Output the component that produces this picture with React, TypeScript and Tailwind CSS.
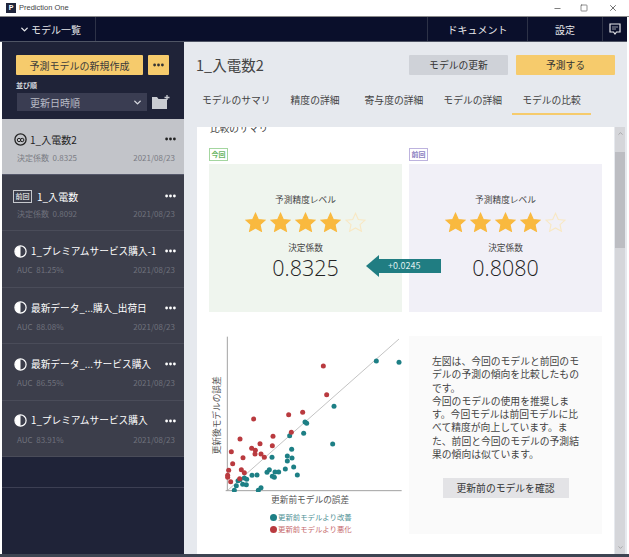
import { ChevronDown, Minus, Square, X } from "lucide-react";

const FONT = "font-['Noto_Sans_CJK_JP','Noto_Sans',sans-serif]";

const models = [
  { name: "1_プレミアムサービス購入-1", label: "AUC", score: "81.25%" },
  { name: "最新データ_...購入_出荷日", label: "AUC", score: "88.08%" },
  { name: "最新データ_...サービス購入", label: "AUC", score: "86.55%" },
  { name: "1_プレミアムサービス購入", label: "AUC", score: "83.91%" },
];

const tabs = [
  { label: "モデルのサマリ", cls: "" },
  { label: "精度の詳細", cls: "" },
  { label: "寄与度の詳細", cls: "ml-[5px]" },
  { label: "モデルの詳細", cls: "" },
  { label: "モデルの比較", cls: "border-b-2 border-[#f6cb6c]" },
];

const teal = [
  [544, 123], [612, 127], [417, 259], [330, 306], [335, 310], [326, 340], [284, 347], [413, 372],
  [290, 388], [231, 412], [277, 408], [291, 414], [277, 423], [296, 441], [271, 447], [307, 465],
  [223, 449], [216, 457], [240, 456], [251, 456], [232, 469], [238, 472], [171, 466], [186, 465],
  [148, 474], [155, 478], [135, 479], [129, 482], [124, 497], [143, 493], [154, 494], [118, 511],
  [190, 511], [198, 503],
];

const red = [
  [385, 138], [395, 224], [323, 277], [281, 284], [176, 297], [289, 337], [234, 349], [135, 357],
  [195, 371], [232, 377], [170, 385], [181, 391], [180, 402], [198, 402], [208, 412], [109, 395],
  [144, 413], [113, 431], [139, 449], [148, 458], [101, 451], [98, 466], [98, 472], [134, 476],
  [107, 485],
];

const Dots = () => (
  <svg width="11" height="4" viewBox="0 0 11 4" fill="currentColor" className="shrink-0">
    <circle cx="1.6" cy="2" r="1.4" />
    <circle cx="5.5" cy="2" r="1.4" />
    <circle cx="9.4" cy="2" r="1.4" />
  </svg>
);

const HalfCircle = () => (
  <svg width="13" height="13" viewBox="0 0 13 13" className="shrink-0">
    <circle cx="6.5" cy="6.5" r="5.6" fill="#3c3e4b" stroke="#fff" strokeWidth="1.2" />
    <path d="M6.500 1a5.500 5.500 0 0 0 0 11z" fill="#fff" />
  </svg>
);

const Star = ({ filled }: { filled: boolean }) => (
  <svg width="21" height="20" viewBox="0 0 24 23">
    <path
      d="M12 1.500l3.200 7.100 7.800.8-5.800 5.200 1.600 7.600L12 18.300l-6.800 3.900 1.600-7.600L1 9.400l7.800-.8z"
      fill={filled ? "#f9b93f" : "none"}
      stroke={filled ? "#f9b93f" : "#f8e8c4"}
      strokeWidth="1.300"
    />
  </svg>
);

const ModelItem = ({ name, label, score }: { name: string; label: string; score: string }) => (
  <div className="h-[56.4px] border-b border-[#4a4c59] bg-[#3c3e4b] pl-[12px] pr-[9px] pt-[11px]">
    <div className="-mr-[1px] flex h-[18px] items-center justify-between text-white">
      <div className="flex items-center gap-[4px] text-[9.7px] whitespace-nowrap">
        <HalfCircle />
        {name}
      </div>
      <Dots />
    </div>
    <div className="mt-[4px] flex justify-between pl-[3px] text-[8px] leading-[12px] text-[#6f717c]">
      <span>
        {label}&nbsp;&nbsp;{score}
      </span>
      <span>2021/08/23</span>
    </div>
  </div>
);

const Sidebar = () => (
  <aside className="flex w-[182px] flex-col bg-[#1f2338]">
    <div className="pl-[14px] pr-[12px] pt-[13px]">
      <div className="flex gap-[5px]">
        <button className="h-[20px] w-[127px] rounded-[1px] bg-[#f6cb6c] text-[10px] text-[#3b3b3b]">
          予測モデルの新規作成
        </button>
        <button className="flex h-[20px] w-[21px] items-center justify-center rounded-[1px] bg-[#f6cb6c] text-[#333]">
          <Dots />
        </button>
      </div>
      <div className="mt-[3px] text-[7px] font-bold leading-[14px] text-[#d4d6dc]">並び順</div>
      <div className="mt-[1px] flex items-center gap-[5px] pl-[1px]">
        <div className="flex h-[18px] w-[130px] items-center justify-between bg-[#3a3d52] pl-[13px] pr-[4px] text-[10px] text-[#b9bcc6]">
          更新日時順
          <ChevronDown size={11} strokeWidth={3} className="text-[#d8dae0]" />
        </div>
        <svg width="18" height="14" viewBox="0 0 18 14">
          <path d="M0 2h5l1.500 2H15v10H0z" fill="#c9ccd2" />
          <path d="M15 0v5M12.500 2.500h5" stroke="#c9ccd2" strokeWidth="1.300" />
        </svg>
      </div>
    </div>
    <div className="mt-[8px] h-[56px] border-b border-[#55586a] bg-[#c2c4c9] pl-[12px] pr-[9px] pt-[11px]">
      <div className="-mr-[1px] flex h-[18px] items-center justify-between text-[#222]">
        <div className="flex items-center gap-[3px] text-[10px]">
          <svg width="13" height="13" viewBox="0 0 13 13">
            <circle cx="6.500" cy="6.500" r="5.600" fill="none" stroke="#222" strokeWidth="1.300" />
            <circle cx="5" cy="7" r="1.700" fill="none" stroke="#222" />
            <circle cx="8.200" cy="7" r="1.700" fill="none" stroke="#222" />
          </svg>
          1_入電数2
        </div>
        <Dots />
      </div>
      <div className="mt-[4px] flex justify-between pl-[3px] text-[8px] leading-[12px] text-[#7a7c84]">
        <span>決定係数&nbsp;&nbsp;0.8325</span>
        <span>2021/08/23</span>
      </div>
    </div>
    <div className="h-[56.4px] border-b border-[#4a4c59] bg-[#3c3e4b] pl-[11px] pr-[9px] pt-[12px]">
      <div className="-mr-[1px] flex h-[18px] items-center justify-between text-white">
        <div className="flex items-center gap-[5px] text-[10px]">
          <span className="w-[19px] border border-[#c6c8cd] text-center text-[7px] leading-[11px]">前回</span>
          1_入電数
        </div>
        <Dots />
      </div>
      <div className="mt-[3px] flex justify-between pl-[4px] text-[8px] leading-[12px] text-[#6f717c]">
        <span>決定係数&nbsp;&nbsp;0.8092</span>
        <span>2021/08/23</span>
      </div>
    </div>
    {models.map((m) => (
      <ModelItem key={m.name} name={m.name} label={m.label} score={m.score} />
    ))}
    <div className="h-[31px] border-b border-[#3c3f53]" />
  </aside>
);

const Summary = ({
  tag,
  tagClass,
  bg,
  value,
}: {
  tag: string;
  tagClass: string;
  bg: string;
  value: string;
}) => (
  <div className="w-[193px]">
    <span className={`block w-[19px] border text-center text-[7px] font-bold leading-[11px] ${tagClass}`}>
      {tag}
    </span>
    <div className={`mt-[3px] flex h-[148px] flex-col items-center pt-[29px] ${bg}`}>
      <div className="text-[8.7px] leading-[14px] text-[#444]">予測精度レベル</div>
      <div className="mt-[5px] flex gap-[4px]">
        <Star filled />
        <Star filled />
        <Star filled />
        <Star filled />
        <Star filled={false} />
      </div>
      <div className="mt-[9px] text-[8.7px] leading-[14px] text-[#444]">決定係数</div>
      <div className="font-['Open_Sans',sans-serif] text-[21.5px] font-light leading-[26px] text-[#222]">
        {value}
      </div>
    </div>
  </div>
);

const Chart = () => (
  <div className="w-[193px]">
    <svg width="193" height="156" viewBox="42 48 579 468" className="block">
      <path d="M97 50V513M92 512H620" stroke="#8a8a8a" strokeWidth="2.400" fill="none" />
      <path d="M97 512L612 57" stroke="#b4b4b4" strokeWidth="2.400" />
      {teal.map(([x, y], i) => (
        <circle key={i} cx={x} cy={y} r="7.500" fill="#1d7f85" />
      ))}
      {red.map(([x, y], i) => (
        <circle key={i} cx={x} cy={y} r="7.500" fill="#b93a3f" />
      ))}
      <text
        transform="translate(75 286) rotate(-90)"
        fontSize="26"
        fill="#555"
        textAnchor="middle"
      >
        更新後モデルの誤差
      </text>
    </svg>
    <div className="mt-[1px] pl-[62px] text-[8.7px] leading-[14px] text-[#555]">更新前モデルの誤差</div>
    <div className="mt-[4px] flex items-center gap-[1px] whitespace-nowrap pl-[61px] text-[7.4px] leading-[12px] text-[#4f9195]">
      <span className="h-[7px] w-[7px] rounded-full bg-[#1d7f85]" />
      更新前モデルより改善
    </div>
    <div className="flex items-center gap-[1px] whitespace-nowrap pl-[61px] text-[7.4px] leading-[12px] text-[#c66a6d]">
      <span className="h-[7px] w-[7px] rounded-full bg-[#b93a3f]" />
      更新前モデルより悪化
    </div>
  </div>
);

export default function App() {
  return (
    <div className={`flex h-[557px] w-[629px] flex-col overflow-hidden bg-white ${FONT}`}>
      <div className="flex h-[17px] shrink-0 items-center border-b border-[#8a8a8a] pl-[6px] pr-[11px] font-['Liberation_Sans',sans-serif] text-[7.5px] text-[#444]">
        <span className="flex h-[10px] w-[10px] items-center justify-center bg-[#20263c] text-[7px] font-bold text-white">
          P
        </span>
        <span className="ml-[3px] flex-1">Prediction One</span>
        <Minus size={9} className="mr-[18px] text-[#555]" />
        <Square size={8} className="mr-[20px] text-[#555]" />
        <X size={10} className="text-[#555]" />
      </div>
      <div className="flex h-[25px] w-[627px] shrink-0 items-center border-b border-[#4f5565] bg-[#0a0f2b] text-[10px] text-[#e6e7ea]">
        <div className="flex h-full w-[96px] items-center gap-[1px] border-r border-[#2d3247] pl-[19px]">
          <ChevronDown size={11} strokeWidth={3} />
          モデル一覧
        </div>
        <div className="flex-1" />
        <div className="flex h-full w-[100px] items-center justify-center border-l border-[#2d3247]">ドキュメント</div>
        <div className="flex h-full w-[75px] items-center justify-center border-l border-[#2d3247]">設定</div>
        <div className="flex h-full w-[25px] items-center justify-center border-l border-[#2d3247]">
          <svg width="12" height="12" viewBox="0 0 12 12">
            <path d="M1 1h10v8H7.500L6 11 4.500 9H1z" fill="none" stroke="#e6e7ea" strokeWidth="1.200" />
            <path d="M3 4h6M3 6h4" stroke="#9a9da8" />
          </svg>
        </div>
      </div>
      <div className="flex h-[512px] w-[627px] shrink-0 pl-[2px]">
        <Sidebar />
        <main className="flex flex-1 flex-col bg-[#e6e9ee]">
          <div className="mt-[13px] flex h-[20px] items-center justify-between pl-[12px] pr-[12px]">
            <h1 className="text-[14.5px] leading-[20px] text-[#444]">1_入電数2</h1>
            <div className="flex gap-[8px]">
              <button className="h-[20px] w-[99px] rounded-[1px] bg-[#cfd2d8] text-[9.8px] text-[#333]">
                モデルの更新
              </button>
              <button className="h-[20px] w-[99px] rounded-[1px] bg-[#f6cb6c] text-[9.8px] text-[#333]">
                予測する
              </button>
            </div>
          </div>
          <div className="mt-[13px] flex pl-[8px] text-[9.8px] text-[#444]">
            {tabs.map((t) => (
              <div key={t.label} className={`h-[27px] px-[10px] pt-[5px] leading-[15px] ${t.cls}`}>
                {t.label}
              </div>
            ))}
          </div>
          <div className="mt-[12px] flex flex-1 overflow-hidden pl-[13px]">
            <div className="w-[417px] overflow-hidden bg-white pl-[12px]">
              <div className="-mt-[5px] pl-[1px] text-[9.7px] leading-[12px] text-[#444]">比較のサマリ</div>
              <div className="relative mt-[14px] flex gap-[7px]">
                <Summary tag="今回" tagClass="border-[#a4d6a0] text-[#6ab565]" bg="bg-[#eff5ee]" value="0.8325" />
                <Summary tag="前回" tagClass="border-[#bdb3de] text-[#8c7fc2]" bg="bg-[#f1f0f7]" value="0.8080" />
                <div className="absolute left-[157px] top-[107px] flex items-center">
                  <span className="h-0 w-0 border-y-[11.5px] border-r-[13px] border-y-transparent border-r-[#207d82]" />
                  <span className="h-[14px] w-[62px] bg-[#207d82] pl-[9px] text-[9px] leading-[14px] text-[#dfeeee]">
                    +0.0245
                  </span>
                </div>
              </div>
              <div className="mt-[24px] flex gap-[7px]">
                <Chart />
                <div className="flex h-[198px] w-[193px] flex-col items-center bg-[#fafafa] px-[23px] pt-[19px]">
                  <p className="text-[9.8px] leading-[13.3px] text-[#444]">
                    左図は、今回のモデルと前回のモデルの予測の傾向を比較したものです。
                    <br />
                    今回のモデルの使用を推奨します。今回モデルは前回モデルに比べて精度が向上しています。また、前回と今回のモデルの予測結果の傾向は似ています。
                  </p>
                  <button className="mt-[17px] h-[20px] w-[126px] shrink-0 bg-[#e3e3e6] text-[9.8px] text-[#333]">
                    更新前のモデルを確認
                  </button>
                </div>
              </div>
            </div>
            <div className="ml-[1px] flex w-[10px] flex-col bg-[#d5d6da]">
              <div className="flex h-[25px] items-start justify-center pt-[3px]">
                <ChevronDown size={7} className="rotate-180 text-[#888]" />
              </div>
              <div className="h-[96px] bg-[#bcbdc2]" />
              <div className="flex flex-1 items-end justify-center pb-[3px]">
                <ChevronDown size={7} className="text-[#888]" />
              </div>
            </div>
          </div>
        </main>
      </div>
      <div className="h-[3px] bg-[#3d4452]" />
    </div>
  );
}
